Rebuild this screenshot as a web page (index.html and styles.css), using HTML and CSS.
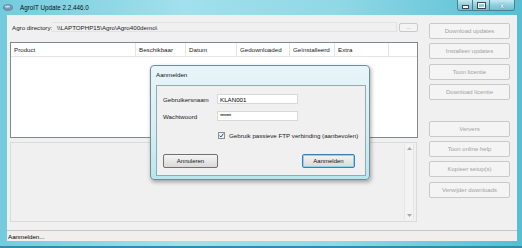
FILE: index.html
```html
<!DOCTYPE html>
<html lang="nl">
<head>
  <meta charset="UTF-8">
  <title>AgroIT Update 2.2.446.0</title>
  <link rel="stylesheet" href="styles.css">
</head>
<body>

  <div class="window">
    <!-- Title bar -->
    <div class="titlebar">
      <svg class="app-icon" width="10" height="7" viewBox="0 0 10 7">
        <ellipse cx="5" cy="3.5" rx="4.6" ry="2.8" fill="#7d98b4" stroke="#4d6680" stroke-width="0.6"/>
        <ellipse cx="4.4" cy="2.6" rx="2.8" ry="1.1" fill="#c9d8e8"/>
      </svg>
      <span class="title">AgroIT Update 2.2.446.0</span>
      <div class="caption-buttons">
        <span class="cap cap-min"><i></i></span>
        <span class="cap cap-max"><i></i></span>
        <span class="cap cap-close">x</span>
      </div>
    </div>

    <div class="client">
      <div class="main">
        <div class="left">
          <div class="dir-row">
            <span class="dir-label">Agro directory:</span>
            <div class="dir-box">\\LAPTOPHP15\Agro\Agro400demo\</div>
            <button class="btn browse" type="button">...</button>
          </div>

          <!-- Product list -->
          <div class="list">
            <div class="list-header">
              <span class="col" style="width: 125px;">Product</span>
              <span class="col" style="width: 50px;">Beschikbaar</span>
              <span class="col" style="width: 51px;">Datum</span>
              <span class="col" style="width: 53px;">Gedownloaded</span>
              <span class="col" style="width: 45px;">Geïnstalleerd</span>
              <span class="col" style="width: 54px;">Extra</span>
              <span class="col col-rest"></span>
            </div>
          </div>

          <!-- Log output -->
          <div class="log">
            <div class="scrollbar">
              <svg width="5" height="3" viewBox="0 0 5 3"><path d="M0 3 L2.5 0 L5 3 Z" fill="#a8a8a8"/></svg>
              <svg width="5" height="3" viewBox="0 0 5 3"><path d="M0 0 L2.5 3 L5 0 Z" fill="#a8a8a8"/></svg>
            </div>
          </div>
        </div>

        <div class="actions">
          <button class="btn action" type="button">Download updates</button>
          <button class="btn action" type="button">Installeer updates</button>
          <button class="btn action" type="button">Toon licentie</button>
          <button class="btn action" type="button">Download licentie</button>
          <button class="btn action spaced" type="button">Ververs</button>
          <button class="btn action" type="button">Toon online help</button>
          <button class="btn action" type="button">Kopieer setup(s)</button>
          <button class="btn action" type="button">Verwijder downloads</button>
        </div>
      </div>

      <div class="status">Aanmelden...</div>
    </div>

    <!-- Login dialog -->
    <div class="dialog">
      <div class="dialog-title">Aanmelden</div>
      <div class="dialog-body">
        <div class="form-row">
          <label class="form-label">Gebruikersnaam</label>
          <div class="field">KLAN001</div>
        </div>
        <div class="form-row">
          <label class="form-label">Wachtwoord</label>
          <div class="field password">*******</div>
        </div>
        <div class="check-row">
          <svg class="checkbox" width="7" height="7" viewBox="0 0 7 7">
            <rect x="0.5" y="0.5" width="6" height="6" fill="#eef2f6" stroke="#8e8f8f"/>
            <path d="M1.6 3.6 L2.9 5 L5.4 1.6" fill="none" stroke="#2a4fa0" stroke-width="1"/>
          </svg>
          <span>Gebruik passieve FTP verbinding (aanbevolen)</span>
        </div>
        <div class="dialog-buttons">
          <button class="btn dlg-btn" type="button">Annuleren</button>
          <button class="btn dlg-btn default" type="button">Aanmelden</button>
        </div>
      </div>
    </div>
  </div>

</body>
</html>
```

FILE: styles.css
```css
body {
  margin: 0;
  font-family: "Liberation Sans", Arial, sans-serif;
  font-size: 6.2px;
  color: #1a1a1a;
}

.window {
  position: relative;
  width: 522px;
  height: 248px;
  box-sizing: border-box;
  padding: 0 5px 5px 7px;
  display: flex;
  flex-direction: column;
  background: linear-gradient(to right, #74cbdd, #a2e0ec 35%, #8fd8e6 65%, #56bed3);
  border-bottom: 2px solid #2f8ea6;
}

/* Title bar */
.titlebar {
  height: 15px;
  display: flex;
  align-items: flex-start;
  margin-left: -7px;
}

.app-icon {
  margin: 4px 0 0 3px;
}

.title {
  margin: 4px 0 0 7px;
  font-size: 6.3px;
  color: #111;
}

.caption-buttons {
  margin-left: auto;
  margin-right: 2px;
  display: flex;
  height: 10px;
  border: 1px solid #4c7f8e;
  border-top: none;
  border-radius: 0 0 3px 3px;
  overflow: hidden;
}

.cap {
  display: flex;
  align-items: center;
  justify-content: center;
  height: 10px;
  background: linear-gradient(#c6eaf2, #8fd0df 50%, #6cbfd2);
  border-left: 1px solid #4c7f8e;
}

.cap:first-child {
  border-left: none;
}

.cap-min {
  width: 14px;
}

.cap-min i {
  width: 5px;
  height: 2px;
  margin-top: 3px;
  background: #fff;
  border: 1px solid #445;
  box-sizing: content-box;
}

.cap-max {
  width: 16px;
}

.cap-max i {
  width: 5px;
  height: 3px;
  border: 1px solid #fff;
  outline: 1px solid #445;
}

.cap-close {
  width: 24px;
  color: #fff;
  font-weight: bold;
  font-size: 7px;
  text-shadow: 0 0 1px #334;
}

/* Client area */
.client {
  flex: 1;
  display: flex;
  flex-direction: column;
  background-color: #f0f0f0;
}

.main {
  flex: 1;
  display: flex;
  padding: 6px 7px 0 3px;
}

.left {
  width: 408px;
  display: flex;
  flex-direction: column;
}

.dir-row {
  display: flex;
  align-items: center;
  height: 12px;
  padding-left: 2px;
}

.dir-label {
  width: 40px;
  flex-shrink: 0;
  white-space: nowrap;
}

.dir-box {
  width: 345px;
  height: 10px;
  line-height: 10px;
  padding-left: 5px;
  border: 1px solid #e2e2e2;
  border-left: none;
  box-sizing: border-box;
  white-space: nowrap;
}

.btn {
  font-family: inherit;
  font-size: 6px;
  color: #a2a2a2;
  background: #f4f4f4;
  border: 1px solid #c9c9c9;
  border-radius: 2px;
  padding: 0;
  box-sizing: border-box;
}

.browse {
  width: 19px;
  height: 9px;
  margin-left: 2px;
  line-height: 5px;
}

.list {
  margin-top: 9px;
  height: 96px;
  background-color: #fff;
  border: 1px solid #828790;
  box-sizing: border-box;
}

.list-header {
  display: flex;
  height: 13px;
  border-bottom: 1px solid #e5e5e5;
}

.col {
  box-sizing: border-box;
  padding-left: 3px;
  line-height: 13px;
  border-right: 1px solid #e5e5e5;
  white-space: nowrap;
  overflow: hidden;
}

.col-rest {
  flex: 1;
  border-right: none;
}

.log {
  margin-top: 4px;
  height: 80px;
  width: 407px;
  border: 1px solid #dadada;
  box-sizing: border-box;
  display: flex;
  justify-content: flex-end;
  padding: 1px 2px 1px 0;
}

.scrollbar {
  width: 8px;
  display: flex;
  flex-direction: column;
  justify-content: space-between;
  align-items: center;
  padding: 3px 0;
  border-left: 1px solid #e6e6e6;
  border-right: 1px solid #e6e6e6;
  background-color: #f3f3f3;
}

/* Right column buttons */
.actions {
  margin-left: 11px;
  padding-top: 2px;
  display: flex;
  flex-direction: column;
  gap: 4.4px;
}

.action {
  width: 81px;
  height: 16px;
}

.action.spaced {
  margin-top: 16px;
}

.status {
  height: 11px;
  line-height: 11px;
  padding-left: 1px;
  border-top: 1px solid #c6c6c6;
  background-color: #f1eeec;
  box-sizing: border-box;
  color: #000;
}

/* Dialog */
.dialog {
  position: absolute;
  left: 150px;
  top: 65px;
  width: 220px;
  height: 115px;
  box-sizing: border-box;
  padding: 0 3px 3px 5px;
  display: flex;
  flex-direction: column;
  border: 1px solid #6f8d98;
  border-radius: 4px;
  background: linear-gradient(#e9f5f8, #d4eef3 60%, #b8e6ee);
  box-shadow: 1px 2px 4px rgba(0, 0, 0, 0.35);
}

.dialog-title {
  height: 19px;
  line-height: 17px;
  color: #111;
}

.dialog-body {
  flex: 1;
  background-color: #f0f0f0;
  border: 1px solid #93aab3;
  padding: 8px 0 0 6px;
  display: flex;
  flex-direction: column;
}

.form-row {
  display: flex;
  align-items: center;
  height: 10px;
  margin-bottom: 7px;
}

.form-label {
  width: 54px;
}

.field {
  width: 81px;
  height: 10px;
  line-height: 10px;
  box-sizing: border-box;
  padding-left: 2px;
  background-color: #fff;
  border: 1px solid #d8d8d8;
  color: #000;
}

.password {
  font-size: 5px;
  line-height: 8px;
  letter-spacing: -0.4px;
}

.check-row {
  display: flex;
  align-items: center;
  margin: 4px 0 0 55px;
  gap: 4px;
}

.dialog-buttons {
  display: flex;
  justify-content: space-between;
  margin: 15px 10px 0 0;
}

.dlg-btn {
  width: 55px;
  height: 14px;
  color: #111;
  background: linear-gradient(#f4f4f4, #e7e7e7 50%, #d9d9d9);
  border-color: #707070;
  border-radius: 2px;
}

.dlg-btn.default {
  width: 53px;
  border-color: #3c7fb1;
  box-shadow: inset 0 0 0 1px #8fd0f0;
}
```
